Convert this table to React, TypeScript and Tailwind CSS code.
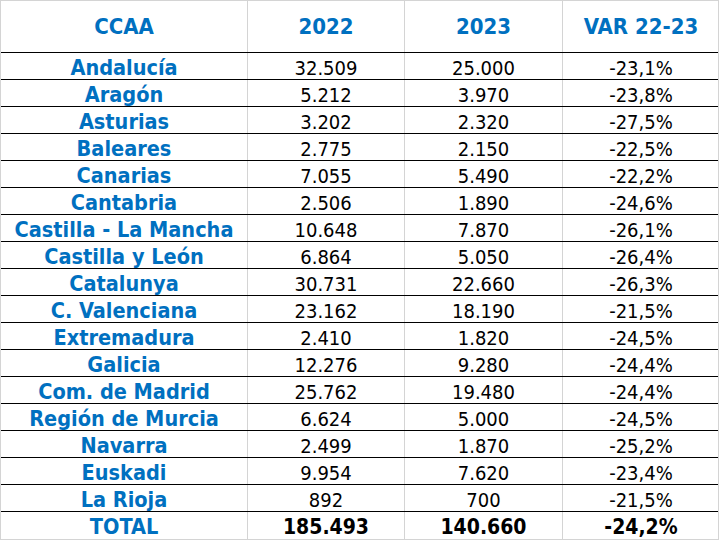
import React from "react";

const rows: [string, string, string, string][] = [
  ["Andalucía", "32.509", "25.000", "-23,1%"],
  ["Aragón", "5.212", "3.970", "-23,8%"],
  ["Asturias", "3.202", "2.320", "-27,5%"],
  ["Baleares", "2.775", "2.150", "-22,5%"],
  ["Canarias", "7.055", "5.490", "-22,2%"],
  ["Cantabria", "2.506", "1.890", "-24,6%"],
  ["Castilla - La Mancha", "10.648", "7.870", "-26,1%"],
  ["Castilla y León", "6.864", "5.050", "-26,4%"],
  ["Catalunya", "30.731", "22.660", "-26,3%"],
  ["C. Valenciana", "23.162", "18.190", "-21,5%"],
  ["Extremadura", "2.410", "1.820", "-24,5%"],
  ["Galicia", "12.276", "9.280", "-24,4%"],
  ["Com. de Madrid", "25.762", "19.480", "-24,4%"],
  ["Región de Murcia", "6.624", "5.000", "-24,5%"],
  ["Navarra", "2.499", "1.870", "-25,2%"],
  ["Euskadi", "9.954", "7.620", "-23,4%"],
  ["La Rioja", "892", "700", "-21,5%"],
];

const font = { fontFamily: '"DejaVu Sans Condensed", "DejaVu Sans", sans-serif', fontStretch: "condensed" as const };

export default function App() {
  return (
    <div className="w-[720px] h-[543px] bg-white overflow-hidden" style={font}>
      <div className="w-[719px] border-l border-t border-r border-[#d4d4d4]">
        <div className="grid grid-cols-[247px_157px_158px_156px] h-[52px] border-b border-black text-[#0070c0] font-bold text-[22px]">
          <div className="flex items-center justify-center border-r border-[#d4d4d4]">CCAA</div>
          <div className="flex items-center justify-center border-r border-[#d4d4d4]">2022</div>
          <div className="flex items-center justify-center border-r border-[#d4d4d4]">2023</div>
          <div className="flex items-center justify-center">VAR 22-23</div>
        </div>
        {rows.map((r) => (
          <div key={r[0]} className="grid grid-cols-[247px_157px_158px_156px] h-[27px] border-b border-black text-[20px] leading-none">
            <div className="flex items-center justify-center pt-[3px] border-r border-[#d4d4d4] text-[#0070c0] font-bold text-[21.5px]">{r[0]}</div>
            <div className="flex items-center justify-center pt-[3px] border-r border-[#d4d4d4] text-black">{r[1]}</div>
            <div className="flex items-center justify-center pt-[3px] border-r border-[#d4d4d4] text-black">{r[2]}</div>
            <div className="flex items-center justify-center pt-[3px] text-black">{r[3]}</div>
          </div>
        ))}
        <div className="grid grid-cols-[247px_157px_158px_156px] h-[28px] border-b border-[#d4d4d4] text-[21px] leading-none font-bold">
          <div className="flex items-center justify-center pt-[3px] border-r border-[#d4d4d4] text-[#0070c0] text-[21.5px]">TOTAL</div>
          <div className="flex items-center justify-center pt-[3px] border-r border-[#d4d4d4] text-black">185.493</div>
          <div className="flex items-center justify-center pt-[3px] border-r border-[#d4d4d4] text-black">140.660</div>
          <div className="flex items-center justify-center pt-[3px] text-black">-24,2%</div>
        </div>
      </div>
    </div>
  );
}
